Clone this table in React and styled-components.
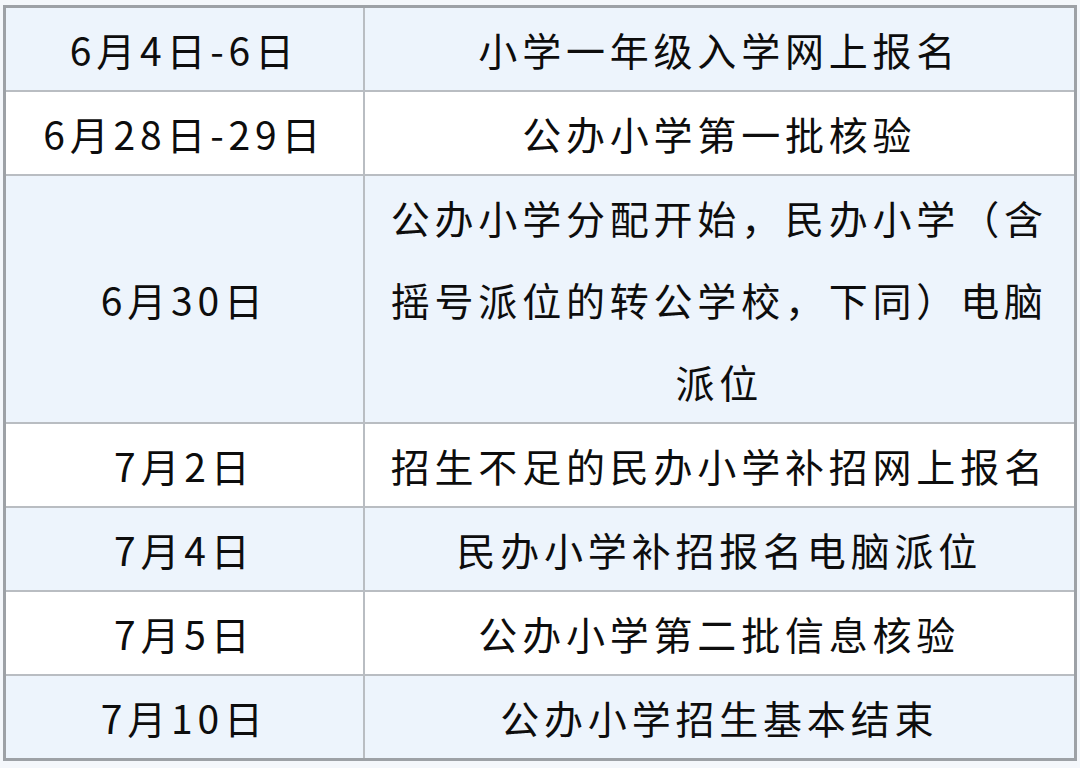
import React from "react";
import styled, { createGlobalStyle } from "styled-components";

const Global = createGlobalStyle`
  html, body { margin: 0; padding: 0; background: #f4f7fb; }
  body { font-family: "Noto Sans CJK SC", "Noto Sans", sans-serif; }
`;

const Page = styled.div`
  padding: 5px 3px 3px 3px;
`;

const Table = styled.table`
  width: 100%;
  border-collapse: collapse;
  border: 3px solid #9da1a6;
  table-layout: fixed;
`;

const Row = styled.tr`
  background: ${(p) => (p.$shade ? "#edf4fc" : "#ffffff")};
`;

const Cell = styled.td`
  border: 2px solid #b9bdc2;
  height: 81.6px;
  padding: 0 20px;
  text-align: center;
  vertical-align: middle;
  font-size: 39px;
  line-height: 82px;
  letter-spacing: 4.8px;
  color: #0d0d0d;
`;

const rows = [
  ["6月4日-6日", "小学一年级入学网上报名"],
  ["6月28日-29日", "公办小学第一批核验"],
  ["6月30日", "公办小学分配开始，民办小学（含摇号派位的转公学校，下同）电脑派位"],
  ["7月2日", "招生不足的民办小学补招网上报名"],
  ["7月4日", "民办小学补招报名电脑派位"],
  ["7月5日", "公办小学第二批信息核验"],
  ["7月10日", "公办小学招生基本结束"],
];

export default function App() {
  return (
    <Page>
      <Global />
      <Table>
        <colgroup>
          <col style={{ width: "359px" }} />
          <col />
        </colgroup>
        <tbody>
          {rows.map(([d, t], i) => (
            <Row key={i} $shade={i % 2 === 0}>
              <Cell>{d}</Cell>
              <Cell>{t}</Cell>
            </Row>
          ))}
        </tbody>
      </Table>
    </Page>
  );
}
